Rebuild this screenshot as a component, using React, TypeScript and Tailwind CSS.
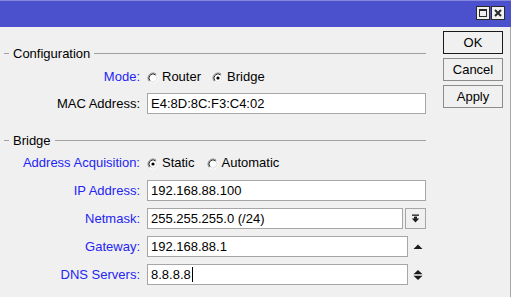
import type { ReactNode } from 'react';

const font = { fontFamily: '"Liberation Sans", Arial, sans-serif' };

function Radio({ checked }: { checked?: boolean }) {
  return (
    <svg width="12" height="12" viewBox="0 0 12 12" className="mt-[3px] shrink-0">
      <circle cx="6" cy="6" r="4.5" fill="#ffffff" />
      <path d="M2.46 9.54 A5 5 0 0 1 9.54 2.46" fill="none" stroke="#8a8a8a" strokeWidth="1" />
      <path d="M3.17 8.83 A4 4 0 0 1 8.83 3.17" fill="none" stroke="#303030" strokeWidth="1" />
      <path d="M9.54 2.46 A5 5 0 0 1 2.46 9.54" fill="none" stroke="#ffffff" strokeWidth="1" />
      <path d="M8.83 3.17 A4 4 0 0 1 3.17 8.83" fill="none" stroke="#e0e0e0" strokeWidth="1" />
      {checked && <circle cx="6" cy="6" r="1.6" fill="#000000" />}
    </svg>
  );
}

function GroupHeader({ title }: { title: string }) {
  return (
    <div className="flex h-[20px] items-center">
      <div className="ml-[4px] h-px w-[5px] bg-[#a0a0a0]" />
      <span className="px-[4px] text-black">{title}</span>
      <div className="h-px flex-1 bg-[#a0a0a0]" />
    </div>
  );
}

function Row({ label, blue, className, children }: { label: string; blue?: boolean; className?: string; children: ReactNode }) {
  return (
    <div className={`flex h-[21px] items-center ${className ?? ''}`}>
      <div className={blue ? 'w-[147px] shrink-0 pr-[7px] text-right text-[#2424f4]' : 'w-[147px] shrink-0 pr-[7px] text-right text-black'}>
        {label}
      </div>
      {children}
    </div>
  );
}

function Field({ value, width, cursor }: { value: string; width: string; cursor?: boolean }) {
  return (
    <div className={`flex h-[21px] items-center border border-[#a6a6a6] bg-white pl-[3px] text-black ${width}`}>
      <span>{value}</span>
      {cursor && <span className="ml-px h-[15px] w-px bg-black" />}
    </div>
  );
}

function DialogButton({ label, isDefault }: { label: string; isDefault?: boolean }) {
  return (
    <button
      type="button"
      className={
        isDefault
          ? 'flex h-[23px] w-[60px] items-center justify-center border border-[#1a1a1a] bg-[#f0f0f0] text-black'
          : 'flex h-[23px] w-[60px] items-center justify-center border border-[#8c8c8c] bg-[#f0f0f0] text-black'
      }
    >
      {label}
    </button>
  );
}

export default function App() {
  return (
    <div className="flex h-[297px] w-[511px] flex-col overflow-hidden bg-[#f0f0f0] text-[13px] leading-none" style={font}>
      {/* title bar */}
      <div className="flex h-[27px] shrink-0 items-start justify-end border-t border-[#8588dc] bg-[#4b50cc] pr-[6px] pt-[5px]">
        <div className="flex h-[14px] w-[14px] items-center justify-center border border-[#2a2a2a] bg-[#f0f0f0]">
          <div className="h-[8px] w-[8px] border border-t-2 border-[#2a2a2a]" />
        </div>
        <div className="ml-px flex h-[14px] w-[14px] items-center justify-center border border-[#2a2a2a] bg-[#f0f0f0]">
          <svg width="8" height="8" viewBox="0 0 8 8">
            <path d="M1 1 L7 7 M7 1 L1 7" stroke="#2a2a2a" strokeWidth="2" />
          </svg>
        </div>
      </div>

      <div className="flex flex-1 border-r border-[#a8a8a8]">
        {/* form */}
        <div className="w-[426px] shrink-0 pt-[16px]">
          <GroupHeader title="Configuration" />
          <Row label="Mode:" blue className="mt-[3px]">
            <Radio />
            <span className="ml-[3px]">Router</span>
            <span className="ml-[11px]"><Radio checked /></span>
            <span className="ml-[3px]">Bridge</span>
          </Row>
          <Row label="MAC Address:" className="mt-[6px]">
            <Field value="E4:8D:8C:F3:C4:02" width="w-[279px]" />
          </Row>

          <div className="mt-[16px]">
            <GroupHeader title="Bridge" />
          </div>
          <Row label="Address Acquisition:" blue className="mt-[2px]">
            <Radio checked />
            <span className="ml-[3px]">Static</span>
            <span className="ml-[12px]"><Radio /></span>
            <span className="ml-[3px]">Automatic</span>
          </Row>
          <Row label="IP Address:" blue className="mt-[7px]">
            <Field value="192.168.88.100" width="w-[279px]" />
          </Row>
          <Row label="Netmask:" blue className="mt-[7px]">
            <Field value="255.255.255.0 (/24)" width="w-[256px]" />
            <div className="ml-[2px] flex h-[21px] w-[21px] items-center justify-center border border-[#a6a6a6] bg-[#f0f0f0]">
              <svg width="9" height="9" viewBox="0 0 9 9">
                <rect x="1" y="0.5" width="7" height="1.3" fill="#1a1a1a" />
                <rect x="3" y="2.6" width="3" height="2.2" fill="#1a1a1a" />
                <path d="M0.8 4.6 H8.2 L4.5 8.4 Z" fill="#1a1a1a" />
              </svg>
            </div>
          </Row>
          <Row label="Gateway:" blue className="mt-[7px]">
            <Field value="192.168.88.1" width="w-[261px]" />
            <svg width="10" height="10" viewBox="0 0 10 10" className="ml-[5px]">
              <path d="M0.5 7 H9.5 L5 2.5 Z" fill="#1a1a1a" />
            </svg>
          </Row>
          <Row label="DNS Servers:" blue className="mt-[7px]">
            <Field value="8.8.8.8" width="w-[261px]" cursor />
            <svg width="10" height="12" viewBox="0 0 10 12" className="ml-[5px]">
              <path d="M0.5 5.3 H9.5 L5 1 Z" fill="#1a1a1a" />
              <path d="M0.5 6.7 H9.5 L5 11 Z" fill="#1a1a1a" />
            </svg>
          </Row>
        </div>

        {/* buttons */}
        <div className="ml-[17px] flex flex-col gap-[4px] pt-[4px]">
          <DialogButton label="OK" isDefault />
          <DialogButton label="Cancel" />
          <DialogButton label="Apply" />
        </div>
      </div>
    </div>
  );
}
